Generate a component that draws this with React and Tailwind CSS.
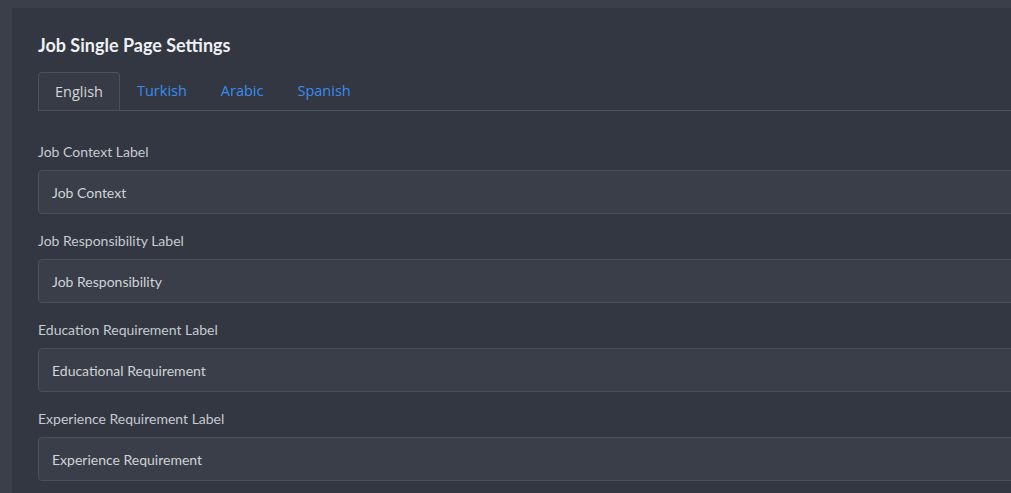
import React from "react";

export default function App() {
  const tabs = ["English", "Turkish", "Arabic", "Spanish"];
  const fields = [
    { label: "Job Context Label", value: "Job Context" },
    { label: "Job Responsibility Label", value: "Job Responsibility" },
    { label: "Education Requirement Label", value: "Educational Requirement" },
    { label: "Experience Requirement Label", value: "Experience Requirement" },
  ];

  return (
    <div className="w-[1011px] h-[493px] overflow-hidden bg-[#3a3f4a] pl-[12px] pt-[8px] font-['Lato',sans-serif]">
      <div className="w-[1040px] h-full bg-[#323741] pl-[26px] pt-[25px]">
        {/* Header */}
        <h2 className="text-[18px] leading-[24px] font-bold text-[#eef0f3]">
          Job Single Page Settings
        </h2>

        {/* Language tabs */}
        <div className="mt-[15px] flex border-b border-[#4b505b] font-['Open_Sans',sans-serif] text-[14.5px]">
          {tabs.map((tab, i) => (
            <div
              key={tab}
              className={
                i === 0
                  ? "h-[38px] px-[16px] flex items-center -mb-px rounded-t-[4px] border border-b-0 border-[#4b505b] bg-[#363b45] text-[#d2d5da]"
                  : "h-[38px] px-[17px] flex items-center text-[#3b8cf0]"
              }
            >
              {tab}
            </div>
          ))}
        </div>

        {/* Fields */}
        <div className="pt-[31px] flex flex-col gap-[17px]">
          {fields.map((f) => (
            <div key={f.label}>
              <label className="block text-[14px] leading-[20px] text-[#c6cad1] mb-[8px]">
                {f.label}
              </label>
              <div className="h-[44px] flex items-center px-[13px] rounded-[4px] border border-[#4b505b] bg-[#3a3e49] text-[14px] text-[#d0d3d8]">
                {f.value}
              </div>
            </div>
          ))}
        </div>
      </div>
    </div>
  );
}
